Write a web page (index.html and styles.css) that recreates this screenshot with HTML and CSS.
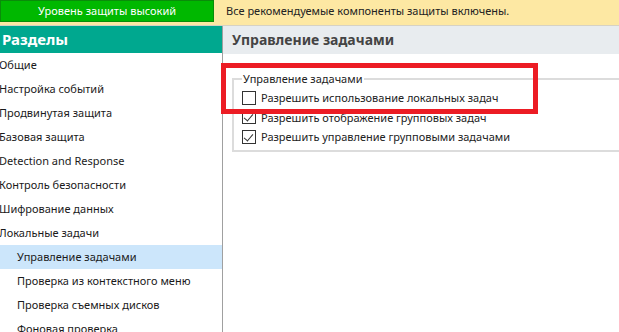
FILE: index.html
```html
<!DOCTYPE html>
<html lang="ru">
<head>
  <meta charset="UTF-8">
  <title>Управление задачами</title>
  <link rel="stylesheet" href="styles.css">
</head>
<body>

  <!-- Status bar -->
  <div class="status-bar">
    <div class="status-level">Уровень защиты высокий</div>
    <div class="status-text">Все рекомендуемые компоненты защиты включены.</div>
  </div>

  <div class="main">
    <!-- Sections list -->
    <aside class="sidebar">
      <div class="sidebar-title">Разделы</div>
      <ul class="sections">
        <li>Общие</li>
        <li>Настройка событий</li>
        <li>Продвинутая защита</li>
        <li>Базовая защита</li>
        <li>Detection and Response</li>
        <li>Контроль безопасности</li>
        <li>Шифрование данных</li>
        <li>Локальные задачи</li>
        <li class="sub active">Управление задачами</li>
        <li class="sub">Проверка из контекстного меню</li>
        <li class="sub">Проверка съемных дисков</li>
        <li class="sub">Фоновая проверка</li>
      </ul>
    </aside>

    <!-- Settings panel -->
    <section class="content">
      <div class="content-title">Управление задачами</div>
      <fieldset class="group">
        <legend>Управление задачами</legend>
        <label class="option"><span class="box"></span>Разрешить использование локальных задач</label>
        <label class="option"><span class="box checked"></span>Разрешить отображение групповых задач</label>
        <label class="option"><span class="box checked"></span>Разрешить управление групповыми задачами</label>
      </fieldset>
      <div class="highlight"></div>
    </section>
  </div>

</body>
</html>
```

FILE: styles.css
```css
/* General Reset */
* {
  margin: 0;
  padding: 0;
  box-sizing: border-box;
}

body {
  font-family: 'Noto Sans', 'Open Sans', sans-serif;
  font-size: 11px;
  color: #1a1a1a;
  background-color: #fff;
  width: 619px;
  height: 332px;
  overflow: hidden;
}

/* Status Bar */
.status-bar {
  display: flex;
  align-items: flex-start;
  height: 26px;
  background-color: #fde8a3;
  border-bottom: 1px solid #d6d2c4;
}

.status-level {
  width: 214px;
  height: 22px;
  line-height: 20px;
  background-color: #00b800;
  border: 1px solid #0a8c0a;
  color: #fff;
  text-align: center;
}

.status-text {
  line-height: 22px;
  padding-left: 12px;
  color: #222;
}

/* Main layout */
.main {
  display: flex;
  height: 306px;
}

.sidebar {
  width: 223px;
  border-right: 1px solid #a0a0a0;
  flex-shrink: 0;
}

.sidebar-title {
  height: 27px;
  line-height: 26px;
  background-color: #00a88f;
  color: #fff;
  font-size: 15px;
  font-weight: bold;
  padding-left: 2px;
}

.sections {
  list-style: none;
}

.sections li {
  height: 24px;
  line-height: 24px;
  margin-left: -1px;
  white-space: nowrap;
}

.sections li.sub {
  padding-left: 18px;
}

.sections li.active {
  background-color: #cce6fb;
}

/* Content */
.content {
  flex: 1;
  position: relative;
}

.content-title {
  height: 28px;
  line-height: 27px;
  background-color: #e8ecef;
  color: #444;
  font-size: 14px;
  font-weight: bold;
  padding-left: 9px;
}

.group {
  margin: 17px -10px 0 9px;
  border: 2px solid #dcdcdc;
  padding: 2px 0 4px 8px;
  height: 81px;
}

.group legend {
  padding: 0 1px;
  color: #222;
}

.option {
  display: flex;
  align-items: center;
  height: 19.5px;
  gap: 5px;
  color: #222;
}

.box {
  width: 14px;
  height: 14px;
  border: 1px solid #333;
  background-color: #fff;
  position: relative;
}

.box.checked::after {
  content: "";
  position: absolute;
  left: 3px;
  top: 1px;
  width: 4px;
  height: 8px;
  border-right: 1px solid #333;
  border-bottom: 1px solid #333;
  transform: rotate(40deg);
}

/* Red callout frame drawn over the group */
.highlight {
  position: absolute;
  left: -2px;
  top: 37px;
  width: 317px;
  height: 51px;
  border: 5px solid #ec1c24;
}
```
